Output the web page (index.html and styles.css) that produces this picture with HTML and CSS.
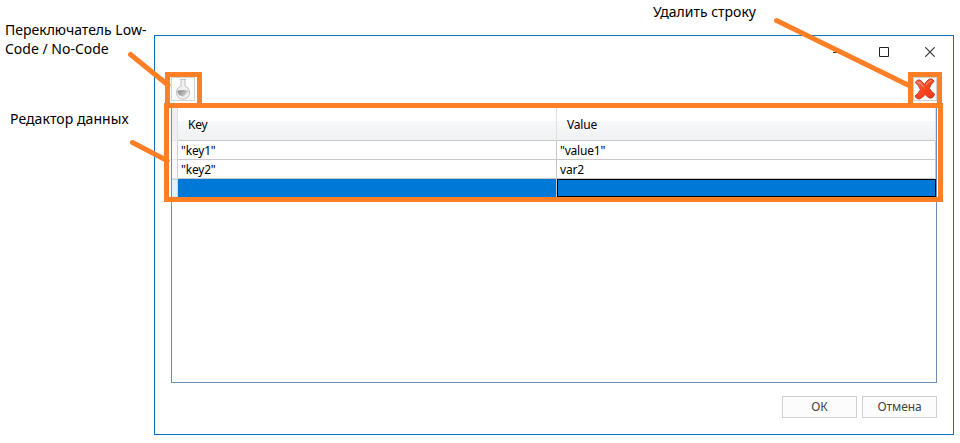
FILE: index.html
```
<!DOCTYPE html>
<html lang="ru">
<head>
<meta charset="utf-8">
<title>Редактор данных</title>
<link rel="stylesheet" href="styles.css">
</head>
<body>
<main class="stage">
  <section class="dialog">
    <header class="titlebar">
      <svg width="10" height="10" viewBox="0 0 10 10"><path d="M0 5.5H10" stroke="#333"/></svg>
      <svg width="10" height="10" viewBox="0 0 10 10"><path d="M.5.5h9v9h-9z" fill="none" stroke="#222"/></svg>
      <svg width="10" height="10" viewBox="0 0 10 10"><path d="M.3.3 9.7 9.7M9.7.3.3 9.7" stroke="#333" stroke-width="1.2"/></svg>
    </header>
    <div class="toolbar">
      <button class="tool" aria-label="Low-Code / No-Code">
        <svg width="22" height="24" viewBox="0 0 22 24">
          <defs><linearGradient id="glass" x2="1" y2=".4"><stop offset="0" stop-color="#8e8e8e"/><stop offset=".5" stop-color="#a8a8a8"/><stop offset="1" stop-color="#d8d8d8"/></linearGradient></defs>
          <path d="M8 2.500h6M9 3v6.200a6.700 6.700 0 1 0 4 0V3" fill="#f0f0f0" stroke="#c0c0c0"/>
          <path d="M5.300 13.700Q11 12.200 16.700 13.700A5.700 5.700 0 1 1 5.300 13.700Z" fill="url(#glass)"/>
          <path d="M12.500 19q2.800-.8 3.200-3.300" fill="none" stroke="#f2f2f2" stroke-width="1.300"/>
        </svg>
      </button>
      <button class="tool" aria-label="Удалить строку">
        <svg width="22" height="24" viewBox="0 0 22 24">
          <defs><linearGradient id="red" x2="1" y2="1"><stop stop-color="#f2785a"/><stop offset=".5" stop-color="#fa4620"/><stop offset="1" stop-color="#ee3414"/></linearGradient></defs>
          <path d="M1.300 5.500Q2.800 2.300 6 3Q8.200 4.200 10.300 7.600Q12.500 3.500 15.500 2Q18.700 1.300 20 4.200Q16.500 7.500 15.300 11.300Q17.500 15 20.600 17Q19.800 20.500 16.700 21.300Q13.200 20.200 11 17.400Q8.800 20.700 5.600 22Q2.300 22.200 1 19Q4.800 16.500 6.400 12.500Q4.700 8.300 1.300 5.500Z" fill="url(#red)" stroke="#c83a28" stroke-linejoin="round"/>
          <path d="M3.500 5Q6 4.800 9.600 10M12 8Q14.500 4 17.600 3.500" fill="none" stroke="#f5a08b" stroke-width=".9"/>
        </svg>
      </button>
    </div>
    <div class="editor">
      <div class="row head"><span class="mark"></span><span class="cell">Key</span><span class="cell">Value</span></div>
      <div class="row"><span class="mark"></span><span class="cell">"key1"</span><span class="cell">"value1"</span></div>
      <div class="row"><span class="mark"></span><span class="cell">"key2"</span><span class="cell">var2</span></div>
      <div class="row selected"><span class="mark"></span><span class="cell"></span><span class="cell focus"></span></div>
    </div>
    <footer class="actions"><button class="btn">ОК</button><button class="btn">Отмена</button></footer>
  </section>
  <svg class="marks" width="960" height="443" viewBox="0 0 960 443" fill="none" stroke="#ff7f27" stroke-width="5">
    <path d="M167.500 74.500h32v31h-32zM910.500 74.500h29v31h-29zM166.500 105.500h774v94h-774z"/>
    <path d="M130.500 54.500 168 85M132.500 142.500 167 160.500M776.500 20.500 910 86" stroke-linecap="round"/>
  </svg>
  <p class="note note-switch">Переключатель Low-<br>Code / No-Code</p>
  <p class="note note-editor">Редактор данных</p>
  <p class="note note-delete">Удалить строку</p>
</main>
</body>
</html>
```
FILE: styles.css
```
* { box-sizing: border-box; }
body { margin: 0; background: #fff; font-family: "Noto Sans", "Open Sans", sans-serif; color: #000; overflow: hidden; }
.stage { position: relative; width: 960px; height: 443px; padding: 35px 0 0 154px; }
.dialog { width: 800px; height: 400px; border: 1px solid #0b71c1; padding: 0 16px; display: flex; flex-direction: column; }
.titlebar { height: 41px; padding: 11px 2px 0 0; display: flex; justify-content: flex-end; gap: 36px; }
.toolbar { height: 27px; display: flex; justify-content: space-between; }
.tool { width: 24px; height: 24px; margin: 0; padding: 0; border: 1px solid #d3d3d3; background: #fcfcfc; overflow: hidden; }
.tool svg { display: block; margin-top: -1px; }
.editor { height: 279px; border: 1px solid #6b8fb9; }
.row { display: grid; grid-template-columns: 6px 379px 379px; grid-template-rows: 100%; height: 19px; font-size: 12px; line-height: 20px; letter-spacing: -.2px; }
.mark { border-right: 1px solid #d0d0d0; border-bottom: 1px solid #e4e4e4; background: #f7f9fa; }
.cell { padding-left: 3px; border-right: 1px solid #c8c8c8; border-bottom: 1px solid #c8c8c8; white-space: pre; }
.row.head { height: 36px; line-height: 40px; }
.head .mark { background: #f0f0f0; border-right-color: #e0e0e0; }
.head .cell { padding-left: 10px; border-right-color: #e0e0e0; background: linear-gradient(#fff 0 16px, #f7f8fa 16px, #f0f1f3 100%); }
.row.selected { height: 20px; }
.selected .cell { background: #0078d7; border-bottom: 0; }
.selected .mark { background: #e3f3fb; border-top: 1px solid #9bdcf5; border-right-color: #b8def2; }
.selected .focus { height: 18px; border: 1px solid #000; }
.selected .cell, .selected .mark { height: 18px; }
.actions { display: flex; justify-content: flex-end; gap: 5px; padding-top: 13px; }
.btn { width: 75px; height: 22px; padding: 0; border: 1px solid #d0d0d0; background: #fcfcfc; color: #444; font: 12px/20px "Noto Sans", sans-serif; letter-spacing: -.1px; }
.marks { position: absolute; left: 0; top: 0; }
.note { position: absolute; margin: 0; font-size: 14px; line-height: 19px; white-space: nowrap; }
.note-switch { left: 5px; top: 20px; }
.note-editor { left: 10px; top: 109px; letter-spacing: .06px; }
.note-delete { left: 653px; top: 2px; }
```
